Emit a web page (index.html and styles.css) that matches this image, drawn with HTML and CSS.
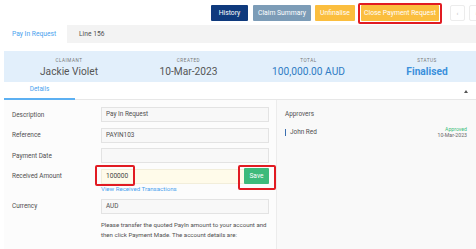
FILE: index.html
```html
<!DOCTYPE html>
<html>
<head>
<meta charset="utf-8">
<link rel="stylesheet" href="styles.css">
</head>
<body>
<div class="page">
  <div class="topbar">
    <button class="btn btn-history">History</button>
    <button class="btn btn-claim">Claim Summary</button>
    <button class="btn btn-amber btn-unfin">Unfinalise</button>
    <button class="btn btn-amber btn-close">Close Payment Request</button>
    <button class="pager pager-prev">‹</button>
    <button class="pager">›</button>
  </div>

  <div class="tabs">
    <div class="tab active">Pay In Request</div>
    <div class="tab">Line 156</div>
  </div>

  <div class="summary">
    <div class="sum-col"><div class="sum-label">CLAIMANT</div><div class="sum-value">Jackie Violet</div></div>
    <div class="sum-col"><div class="sum-label">CREATED</div><div class="sum-value">10-Mar-2023</div></div>
    <div class="sum-col"><div class="sum-label">TOTAL</div><div class="sum-value blue">100,000.00 AUD</div></div>
    <div class="sum-col"><div class="sum-label">STATUS</div><div class="sum-value status">Finalised</div></div>
  </div>

  <div class="section-head">
    <div class="section-tab">Details</div>
    <div class="caret"></div>
  </div>

  <div class="content">
    <div class="form">
      <div class="row">
        <div class="label">Description</div>
        <div class="input">Pay In Request</div>
      </div>
      <div class="row">
        <div class="label">Reference</div>
        <div class="input">PAYIN103</div>
      </div>
      <div class="row">
        <div class="label">Payment Date</div>
        <div class="input"></div>
      </div>
      <div class="row">
        <div class="label">Received Amount</div>
        <div class="input amount">
          <span>100000</span>
          <button class="save">Save</button>
        </div>
      </div>
      <div class="row link-row">
        <div></div>
        <a class="link">View Received Transactions</a>
      </div>
      <div class="row">
        <div class="label">Currency</div>
        <div class="input">AUD</div>
      </div>
      <div class="row">
        <div></div>
        <p class="note">Please transfer the quoted PayIn amount to your account and then click Payment Made. The account details are:</p>
      </div>
    </div>
    <div class="approvers">
      <div class="appr-title">Approvers</div>
      <div class="appr-row">
        <div class="appr-name">John Red</div>
        <div class="appr-status">
          <div class="approved">Approved</div>
          <div class="appr-date">10-Mar-2023</div>
        </div>
      </div>
    </div>
  </div>

  <div class="mark mark-close"></div>
  <div class="mark mark-amount"></div>
  <div class="mark mark-save"></div>
</div>
</body>
</html>
```

FILE: styles.css
```css
html, body {
  margin: 0;
  padding: 0;
  overflow: hidden;
  background: #ffffff;
}
body {
  font-family: Roboto, "Liberation Sans", Arial, sans-serif;
  color: #505050;
}
.page {
  position: relative;
  width: 486px;
  height: 249px;
}

/* top bar */
.topbar {
  height: 25px;
  box-sizing: border-box;
  padding-top: 5px;
  padding-left: 211px;
  display: flex;
  align-items: flex-start;
}
.btn {
  height: 16px;
  border: none;
  border-radius: 1px;
  padding: 0;
  color: #fff;
  font-family: inherit;
  font-size: 6.8px;
  line-height: 16px;
  text-align: center;
  white-space: nowrap;
}
.btn-history { width: 37px; background: #0f3a7d; margin-right: 5px; }
.btn-claim { width: 58px; background: #7c9cb7; margin-right: 4px; }
.btn-amber { background: #fbbe3e; }
.btn-unfin { width: 40px; margin-right: 6px; }
.btn-close { width: 78px; margin-right: 11px; }
.pager {
  width: 15px;
  height: 16px;
  padding: 0;
  border: 1px solid #ececec;
  border-radius: 2px;
  background: #fff;
  color: #b5b5b5;
  font-size: 6px;
  line-height: 14px;
  font-family: inherit;
}
.pager-prev { margin-right: 4px; }

/* tabs */
.tabs {
  height: 18px;
  background: #f3f3f3;
  display: flex;
}
.tab {
  font-size: 6.7px;
  line-height: 18px;
  color: #505050;
  padding: 0 12px;
  white-space: nowrap;
}
.tab.active {
  width: 67px;
  box-sizing: border-box;
  background: #fff;
  color: #4aa2ee;
  padding: 0 0 0 12px;
}

/* summary */
.summary {
  margin: 8px 0 0 4px;
  height: 31px;
  background: #e2effb;
  display: grid;
  grid-template-columns: 122px 117px 123px 114px;
  padding-left: 4px;
  box-sizing: border-box;
}
.sum-col {
  text-align: center;
  padding-top: 7px;
}
.sum-label {
  font-size: 4.6px;
  letter-spacing: 0.55px;
  line-height: 5px;
  color: #777;
}
.sum-value {
  font-size: 10.2px;
  line-height: 12px;
  margin-top: 3px;
  color: #555;
}
.sum-value.blue { color: #2f7cc4; }
.sum-value.status { color: #3a90dc; font-weight: 700; }

/* section header */
.section-head {
  margin-left: 4px;
  width: 472px;
  height: 18px;
  box-sizing: border-box;
  border-bottom: 1px solid #e7e7e7;
  display: flex;
  justify-content: space-between;
  align-items: stretch;
}
.section-tab {
  width: 71px;
  text-align: center;
  font-size: 6.4px;
  color: #4aa2ee;
  line-height: 15px;
  border-bottom: 2px solid #5cb0f2;
  margin-bottom: -1px;
  box-sizing: border-box;
}
.caret {
  width: 0;
  height: 0;
  border-left: 2.5px solid transparent;
  border-right: 2.5px solid transparent;
  border-bottom: 3px solid #555;
  margin: 8px 8px 0 0;
}

/* content */
.content {
  margin-left: 4px;
  width: 472px;
  display: grid;
  grid-template-columns: 272px 1fr;
  height: 149px;
}
.form {
  background: #fcfcfc;
  padding: 7px 0 0 8px;
  display: flex;
  flex-direction: column;
  gap: 5.5px;
}
.row {
  display: grid;
  grid-template-columns: 89px 168px;
  align-items: center;
}
.label {
  font-size: 6.4px;
  color: #505050;
}
.input {
  height: 15px;
  box-sizing: border-box;
  border: 1px solid #e3e3e3;
  background: #f8f8f8;
  font-size: 6.4px;
  line-height: 13px;
  padding-left: 4px;
  color: #505050;
}
.input.amount {
  background: #fffbea;
  display: flex;
  justify-content: space-between;
  align-items: center;
  padding-right: 0;
  border-color: #f2eedb;
  overflow: visible;
}
.amount span { color: #444; font-size: 6.6px; }
.save {
  width: 25px;
  height: 16px;
  border: none;
  border-radius: 1px;
  background: #3dba7b;
  color: #fff;
  font-family: inherit;
  font-size: 6.6px;
  padding: 0;
  margin-right: -1px;
}
.link-row { margin-top: -5px; margin-bottom: -1px; }
.link {
  font-size: 6.1px;
  line-height: 10px;
  color: #4aa2ee;
}
.note {
  margin: 1px 0 0;
  font-size: 6.1px;
  line-height: 10px;
  color: #505050;
}

/* approvers */
.approvers {
  background: #f9f9f9;
  border-left: 1px solid #ececec;
  padding: 10px 9px 0 8px;
}
.appr-title {
  font-size: 6.4px;
  line-height: 8px;
  color: #505050;
}
.appr-row {
  margin-top: 8px;
  display: flex;
  justify-content: space-between;
  align-items: flex-start;
}
.appr-name {
  font-size: 6.4px;
  line-height: 7px;
  margin-top: 3px;
  padding-left: 4px;
  border-left: 1.5px solid #3a6fb0;
  color: #505050;
}
.appr-status {
  text-align: right;
  line-height: 6px;
}
.approved {
  font-size: 5.2px;
  color: #3cbe7c;
}
.appr-date {
  font-size: 5.2px;
  color: #666;
}

/* red hand-drawn annotations */
.mark {
  position: absolute;
  border: 2px solid #e11b22;
  border-radius: 2px;
  box-sizing: border-box;
}
.mark-close { left: 358px; top: 3px; width: 84px; height: 21px; }
.mark-amount { left: 95px; top: 165px; width: 40px; height: 21px; }
.mark-save { left: 238px; top: 165px; width: 38px; height: 25px; }
```
